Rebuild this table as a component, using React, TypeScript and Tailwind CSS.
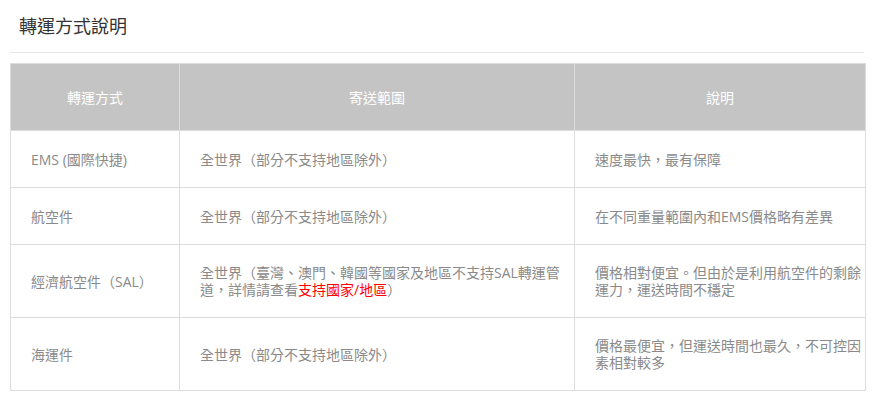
const rows = [
  {
    method: "EMS (國際快捷)",
    range: <>全世界（部分不支持地區除外）</>,
    note: "速度最快，最有保障",
    tall: false,
  },
  {
    method: "航空件",
    range: <>全世界（部分不支持地區除外）</>,
    note: "在不同重量範圍內和EMS價格略有差異",
    tall: false,
  },
  {
    method: "經濟航空件（SAL）",
    range: (
      <>
        全世界（臺灣、澳門、韓國等國家及地區不支持SAL轉運管道，詳情請查看
        <a href="#" className="text-[#ff0000]">
          支持國家/地區
        </a>
        ）
      </>
    ),
    note: "價格相對便宜。但由於是利用航空件的剩餘運力，運送時間不穩定",
    tall: true,
  },
  {
    method: "海運件",
    range: <>全世界（部分不支持地區除外）</>,
    note: "價格最便宜，但運送時間也最久，不可控因素相對較多",
    tall: true,
  },
];

export default function App() {
  return (
    <div
      className="w-[874px] h-[406px] bg-white px-[10px] overflow-hidden"
      style={{ fontFamily: '"Open Sans", "Noto Sans CJK TC", sans-serif' }}
    >
      <div className="h-[53px] border-b border-[#e5e5e5] flex items-center pl-[9px]">
        <h2 className="text-[18px] leading-[24px] text-[#333] font-normal">轉運方式說明</h2>
      </div>

      <table className="mt-[10px] w-[855px] border-collapse border border-[#dddddd] table-fixed text-[14px]">
        <colgroup>
          <col className="w-[169px]" />
          <col className="w-[395px]" />
          <col className="w-[291px]" />
        </colgroup>
        <thead>
          <tr className="bg-[#c4c4c4] text-white">
            <th className="h-[67px] border border-[#dddddd] font-normal text-center">轉運方式</th>
            <th className="h-[67px] border border-[#dddddd] font-normal text-center">寄送範圍</th>
            <th className="h-[67px] border border-[#dddddd] font-normal text-center">說明</th>
          </tr>
        </thead>
        <tbody className="text-[#8a8a8a]">
          {rows.map((row) => (
            <tr key={row.method}>
              <td
                className={`${row.tall ? "h-[73px]" : "h-[57px]"} border border-[#dddddd] pl-[20px] pr-[10px] leading-[17px] align-middle`}
              >
                {row.method}
              </td>
              <td className="border border-[#dddddd] pl-[20px] pr-[8px] leading-[17px] align-middle">
                {row.range}
              </td>
              <td className="border border-[#dddddd] pl-[20px] pr-[2px] leading-[17px] align-middle">
                {row.note}
              </td>
            </tr>
          ))}
        </tbody>
      </table>
    </div>
  );
}
